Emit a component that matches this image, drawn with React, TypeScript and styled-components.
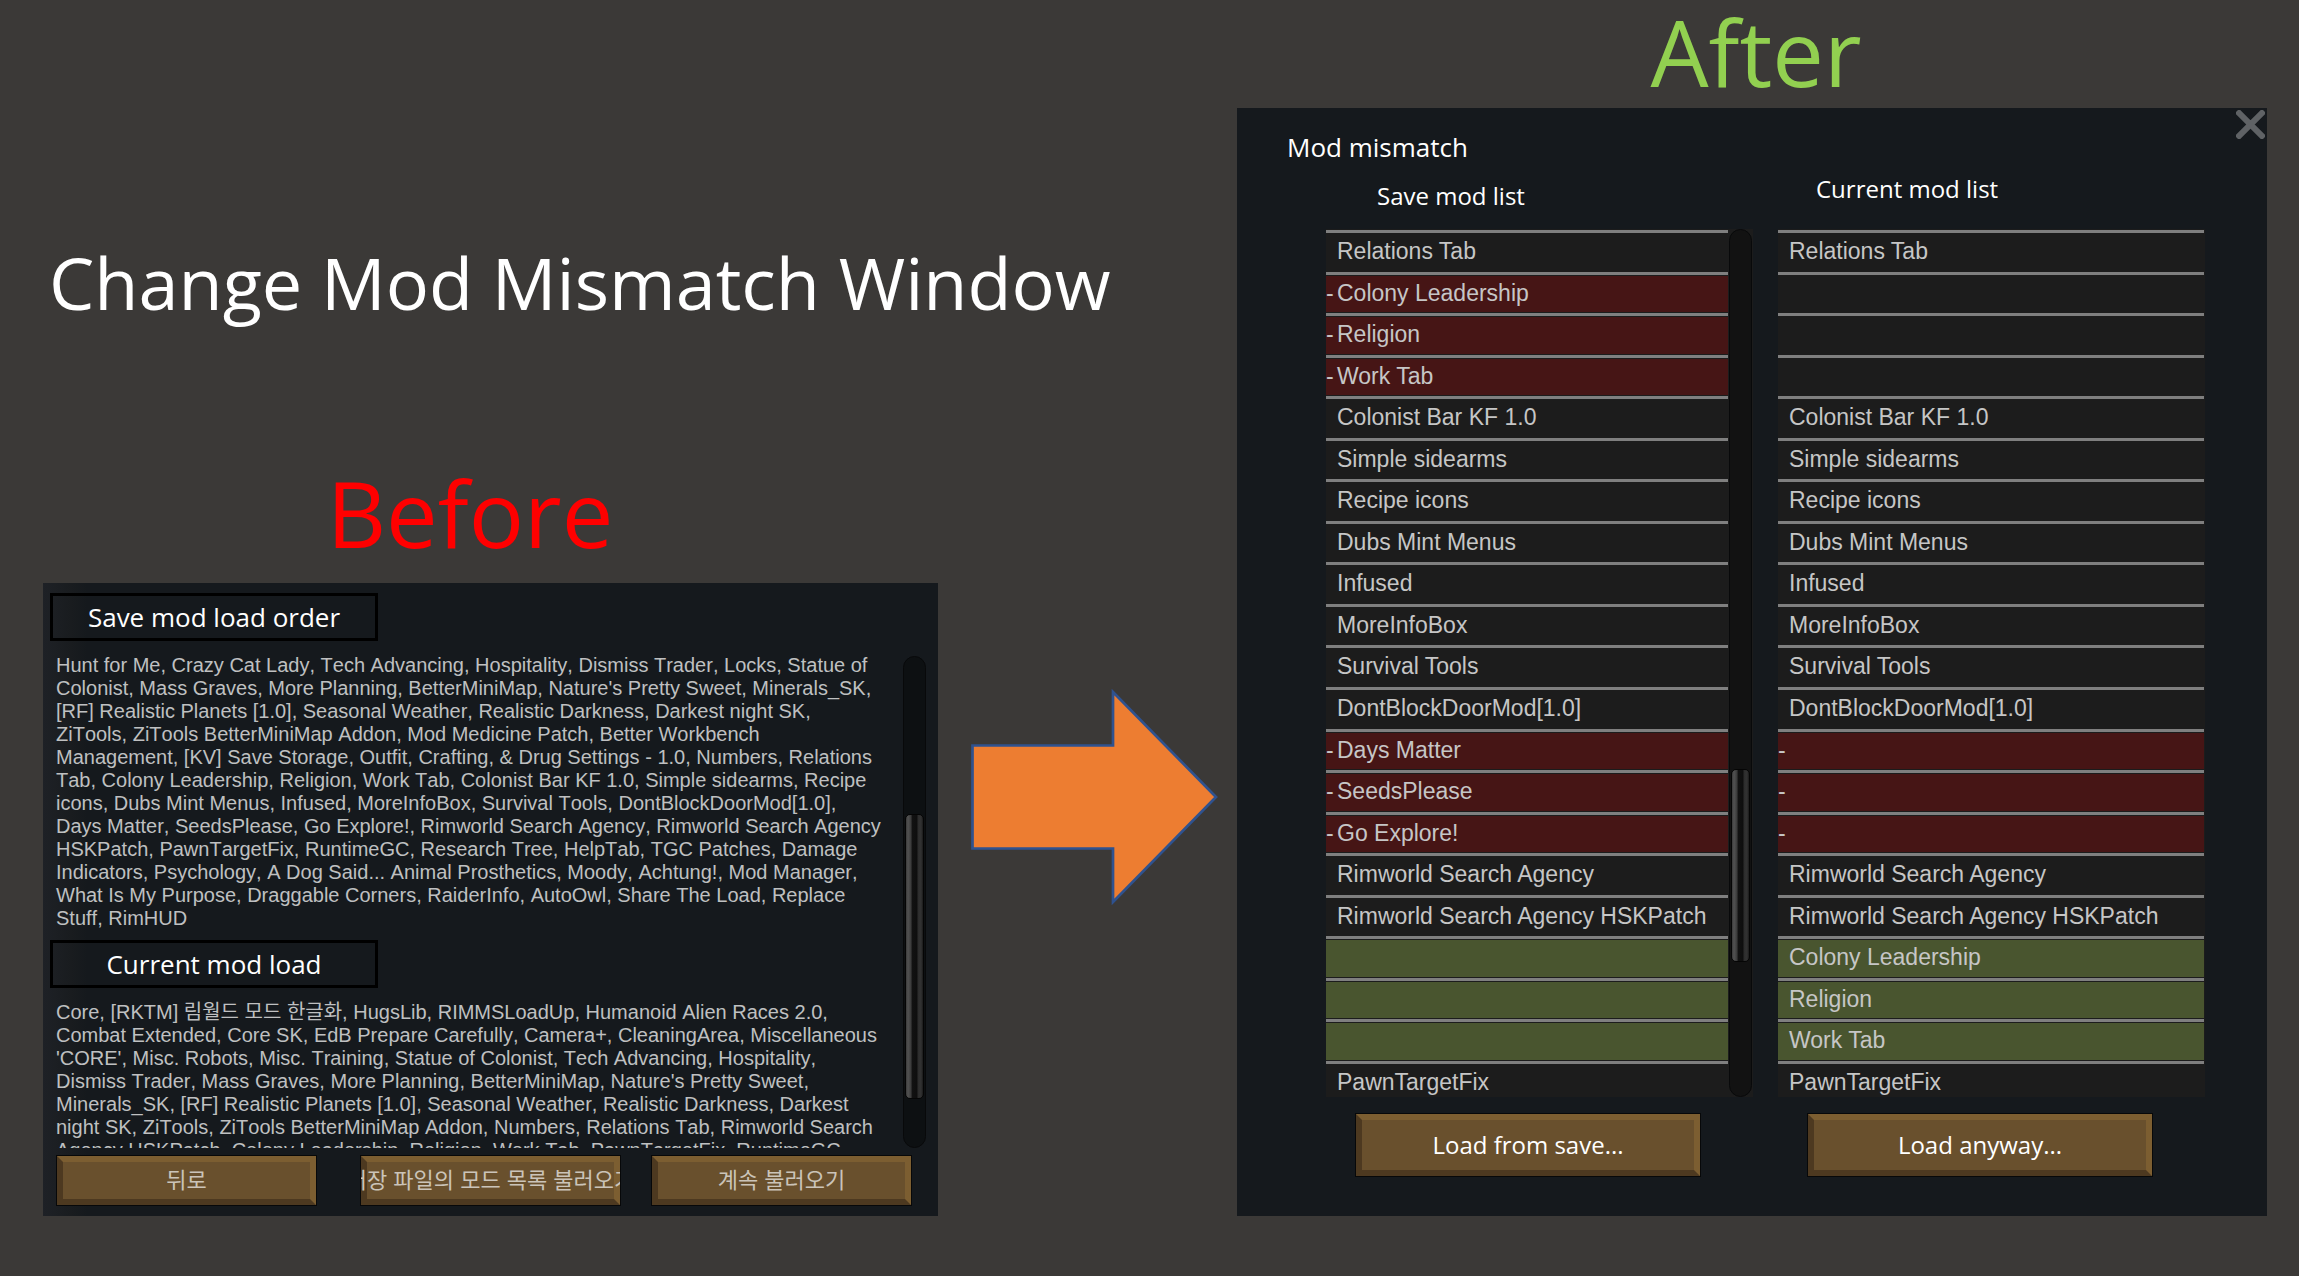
import React from "react";
import styled, { createGlobalStyle } from "styled-components";

const captionFont = `"Open Sans", "Noto Sans", "Noto Sans CJK KR", sans-serif`;
const gameFont = `"Liberation Sans", "Noto Sans CJK KR", sans-serif`;

const GlobalStyle = createGlobalStyle`
  * { box-sizing: border-box; }
  body { margin: 0; background: #3b3937; }
  h1, h2, h3, h4, p, ul { margin: 0; padding: 0; font-weight: 400; }
`;

const Page = styled.main`
  display: grid;
  grid-template-columns: minmax(0, 1194fr) minmax(0, 1030fr);
  min-height: 100vh;
  padding: 4px 32px 60px 43px;
  background: #3b3937;
  color: #fff;
  font-family: ${captionFont};
`;

const LeftSide = styled.section`
  display: flex;
  flex-direction: column;
  justify-content: flex-end;
`;

const RightSide = styled.section`
  display: flex;
  flex-direction: column;
`;

const Title = styled.h1`
  padding-left: 6px;
  margin-bottom: 133px;
  font-size: 72px;
  line-height: 100px;
  white-space: nowrap;
`;

const Comparison = styled.div`
  display: grid;
  grid-template-columns: minmax(0, 895fr) minmax(0, 299fr);
`;

const Caption = styled.h2<{ $color: string }>`
  color: ${(p) => p.$color};
  font-size: 92px;
  line-height: 96px;
  text-align: center;
`;

const BeforeCaption = styled(Caption)`
  grid-column: 1 / -1;
  padding: 0 340px 22px 0;
`;

const AfterCaption = styled(Caption)`
  padding: 0 0 8px 8px;
`;

const BeforeWindow = styled.article`
  display: flex;
  flex-direction: column;
  padding: 10px 12px 10px 7px;
  background: linear-gradient(90deg, #1e2126 0, #191c1f 28px, #15191d 44px);
`;

const LoadOrder = styled.div`
  display: flex;
  height: 555px;
`;

const LoadOrderText = styled.div`
  flex: 1;
  min-width: 0;
  overflow: hidden;
`;

const Label = styled.h3`
  width: 328px;
  height: 48px;
  border: 3px solid #000;
  font-size: 26px;
  line-height: 42px;
  text-align: center;
`;

const ModText = styled.p`
  padding: 13px 0 10px 6px;
  color: #bfc0c1;
  font-family: ${gameFont};
  font-size: 20px;
  font-kerning: none;
  line-height: 23px;
  white-space: nowrap;
`;

const Line = styled.span`
  display: block;
  height: 23px;
`;

const Track = styled.div<{ $fill: string }>`
  display: flex;
  flex-direction: column;
  flex: none;
  width: 23px;
  padding: 0 1px;
  border: 1px solid #08090a;
  border-radius: 12px;
  background: ${(p) => p.$fill};
`;

const LoadOrderTrack = styled(Track)`
  margin-top: 63px;
  padding-top: 157px;
`;

const ListTrack = styled(Track)`
  margin-right: 1px;
  padding-top: 539px;
`;

const Thumb = styled.div<{ $height: number }>`
  height: ${(p) => p.$height}px;
  border: 1px solid #050505;
  border-radius: 5px;
  background: linear-gradient(90deg, #3a3a3a 0, #525252 12%, #3c3c3c 28%, #111 38%, #0e0e0e 62%, #2e2e2e 74%, #323232 88%, #1a1a1a 100%);
`;

const GameButton = styled.button`
  display: flex;
  align-items: center;
  justify-content: center;
  overflow: hidden;
  padding: 0;
  border: 1px solid #070809;
  outline: none;
  white-space: nowrap;
`;

const Bevel = styled.span`
  display: flex;
  flex: 1;
  align-self: stretch;
  align-items: center;
  justify-content: center;
  min-width: 0;
  border: 6px solid;
  border-color: #7c5e31 #7c5e31 #4d3920 #4d3920;
  background: #69502d;
`;

const BeforeButtons = styled.div`
  display: flex;
  padding: 7px 14px 0 6px;
`;

const SmallButton = styled(GameButton)`
  width: 261px;
  height: 51px;
  color: #cbc4b9;
  font-family: ${gameFont};
  font-size: 22px;
  line-height: 30px;

  &:nth-child(2) { margin: 0 30px 0 43px; }
`;

const LargeButton = styled(GameButton)`
  width: 346px;
  height: 64px;
  color: #fff;
  font-family: ${captionFont};
  font-size: 24px;
  line-height: 32px;
`;

const ArrowHolder = styled.div`
  display: flex;
  justify-content: center;
  padding: 106px 0 0 12px;

  svg { width: 248px; height: 216px; }
`;

const AfterWindow = styled.article`
  display: flex;
  flex-direction: column;
  flex: 1;
  position: relative;
  padding: 21px 62px 39px 89px;
  background: #15191d;
`;

const CloseButton = styled.button`
  position: absolute;
  top: 2px;
  right: 2px;
  width: 29px;
  height: 29px;
  padding: 0;
  border: 0;
  background: none;

  svg { display: block; }
`;

const WindowTitle = styled.h3`
  margin: 0 0 8px -39px;
  font-size: 26px;
  line-height: 36px;
`;

const Columns = styled.div`
  display: grid;
  grid-template-columns: minmax(0, 427fr) minmax(0, 427fr);
  column-gap: 25px;
`;

const SaveHeading = styled.h4`
  padding: 7px 0 0 51px;
  font-size: 24px;
  line-height: 32px;
`;

const CurrentHeading = styled.h4`
  padding: 0 0 7px 38px;
  font-size: 24px;
  line-height: 32px;
`;

const ListArea = styled.div`
  display: flex;
  height: 868px;
  margin-top: 17px;
  background: #1c1c1c;
`;

const List = styled.ul`
  display: grid;
  flex: 1;
  grid-template-rows: repeat(20, minmax(0, 1fr)) 36px;
  min-width: 0;
  padding-top: 1px;
  margin-right: 1px;
  list-style: none;
`;

const tones = { none: "#1c1c1c", red: "#461515", green: "#49552f" };
type Tone = keyof typeof tones;

const Row = styled.li<{ $tone: Tone }>`
  display: flex;
  overflow: hidden;
  padding-top: 2px;
  border-top: 3px solid #7f7f7f;
  box-shadow: inset 0 1px #1c1c1c, inset 0 -1px #1c1c1c;
  background: ${(p) => tones[p.$tone]};
  color: #c6c6c6;
  font-family: ${gameFont};
  font-size: 23px;
  line-height: 32px;
  white-space: nowrap;
`;

const Mark = styled.span`
  width: 11px;
  flex: none;
`;

const ButtonCell = styled.div`
  padding: 16px 0 0 29px;
`;

const saveOrder = [
  "Hunt for Me, Crazy Cat Lady, Tech Advancing, Hospitality, Dismiss Trader, Locks, Statue of",
  "Colonist, Mass Graves, More Planning, BetterMiniMap, Nature's Pretty Sweet, Minerals_SK,",
  "[RF] Realistic Planets [1.0], Seasonal Weather, Realistic Darkness, Darkest night SK,",
  "ZiTools, ZiTools BetterMiniMap Addon, Mod Medicine Patch, Better Workbench",
  "Management, [KV] Save Storage, Outfit, Crafting, & Drug Settings - 1.0, Numbers, Relations",
  "Tab, Colony Leadership, Religion, Work Tab, Colonist Bar KF 1.0, Simple sidearms, Recipe",
  "icons, Dubs Mint Menus, Infused, MoreInfoBox, Survival Tools, DontBlockDoorMod[1.0],",
  "Days Matter, SeedsPlease, Go Explore!, Rimworld Search Agency, Rimworld Search Agency",
  "HSKPatch, PawnTargetFix, RuntimeGC, Research Tree, HelpTab, TGC Patches, Damage",
  "Indicators, Psychology, A Dog Said... Animal Prosthetics, Moody, Achtung!, Mod Manager,",
  "What Is My Purpose, Draggable Corners, RaiderInfo, AutoOwl, Share The Load, Replace",
  "Stuff, RimHUD",
];

const currentOrder = [
  "Core, [RKTM] 림월드 모드 한글화, HugsLib, RIMMSLoadUp, Humanoid Alien Races 2.0,",
  "Combat Extended, Core SK, EdB Prepare Carefully, Camera+, CleaningArea, Miscellaneous",
  "'CORE', Misc. Robots, Misc. Training, Statue of Colonist, Tech Advancing, Hospitality,",
  "Dismiss Trader, Mass Graves, More Planning, BetterMiniMap, Nature's Pretty Sweet,",
  "Minerals_SK, [RF] Realistic Planets [1.0], Seasonal Weather, Realistic Darkness, Darkest",
  "night SK, ZiTools, ZiTools BetterMiniMap Addon, Numbers, Relations Tab, Rimworld Search",
  "Agency HSKPatch, Colony Leadership, Religion, Work Tab, PawnTargetFix, RuntimeGC,",
];

type Entry = { name: string; tone?: Tone; mark?: boolean };

const shared: Entry[] = [
  "Colonist Bar KF 1.0",
  "Simple sidearms",
  "Recipe icons",
  "Dubs Mint Menus",
  "Infused",
  "MoreInfoBox",
  "Survival Tools",
  "DontBlockDoorMod[1.0]",
].map((name) => ({ name }));

const saveList: Entry[] = [
  { name: "Relations Tab" },
  { name: "Colony Leadership", tone: "red", mark: true },
  { name: "Religion", tone: "red", mark: true },
  { name: "Work Tab", tone: "red", mark: true },
  ...shared,
  { name: "Days Matter", tone: "red", mark: true },
  { name: "SeedsPlease", tone: "red", mark: true },
  { name: "Go Explore!", tone: "red", mark: true },
  { name: "Rimworld Search Agency" },
  { name: "Rimworld Search Agency HSKPatch" },
  { name: "", tone: "green" },
  { name: "", tone: "green" },
  { name: "", tone: "green" },
  { name: "PawnTargetFix" },
];

const currentList: Entry[] = [
  { name: "Relations Tab" },
  { name: "" },
  { name: "" },
  { name: "" },
  ...shared,
  { name: "", tone: "red", mark: true },
  { name: "", tone: "red", mark: true },
  { name: "", tone: "red", mark: true },
  { name: "Rimworld Search Agency" },
  { name: "Rimworld Search Agency HSKPatch" },
  { name: "Colony Leadership", tone: "green" },
  { name: "Religion", tone: "green" },
  { name: "Work Tab", tone: "green" },
  { name: "PawnTargetFix" },
];

function ModLines({ lines }: { lines: string[] }) {
  return (
    <ModText>
      {lines.map((line) => (
        <Line key={line}>{line}</Line>
      ))}
    </ModText>
  );
}

function ModList({ entries }: { entries: Entry[] }) {
  return (
    <List>
      {entries.map((entry, i) => (
        <Row key={i} $tone={entry.tone ?? "none"}>
          <Mark>{entry.mark ? "-" : ""}</Mark>
          {entry.name}
        </Row>
      ))}
    </List>
  );
}

export default function App() {
  return (
    <>
      <GlobalStyle />
      <Page>
        <LeftSide>
          <Title>Change Mod Mismatch Window</Title>
          <Comparison>
            <BeforeCaption $color="#ff0000">Before</BeforeCaption>
            <BeforeWindow>
              <LoadOrder>
                <LoadOrderText>
                  <Label>Save mod load order</Label>
                  <ModLines lines={saveOrder} />
                  <Label>Current mod load</Label>
                  <ModLines lines={currentOrder} />
                </LoadOrderText>
                <LoadOrderTrack $fill="#0d1012">
                  <Thumb $height={285} />
                </LoadOrderTrack>
              </LoadOrder>
              <BeforeButtons>
                <SmallButton type="button"><Bevel>뒤로</Bevel></SmallButton>
                <SmallButton type="button"><Bevel>저장 파일의 모드 목록 불러오기</Bevel></SmallButton>
                <SmallButton type="button"><Bevel>계속 불러오기</Bevel></SmallButton>
              </BeforeButtons>
            </BeforeWindow>
            <ArrowHolder>
              <svg viewBox="0 0 248 216" aria-hidden="true">
                <path
                  d="M2.5 56.5H143V3L246 108L143 213V159.500H2.500Z"
                  fill="#ed7d31"
                  stroke="#2f528f"
                  strokeWidth="2.7"
                />
              </svg>
            </ArrowHolder>
          </Comparison>
        </LeftSide>
        <RightSide>
          <AfterCaption $color="#92d050">After</AfterCaption>
          <AfterWindow>
            <CloseButton type="button" aria-label="Close">
              <svg width="29" height="29" viewBox="0 0 29 29">
                <path d="M1 1L28 28M28 1L1 28" stroke="#5f6265" strokeWidth="6" />
              </svg>
            </CloseButton>
            <WindowTitle>Mod mismatch</WindowTitle>
            <Columns>
              <SaveHeading>Save mod list</SaveHeading>
              <CurrentHeading>Current mod list</CurrentHeading>
              <ListArea>
                <ModList entries={saveList} />
                <ListTrack $fill="#121212">
                  <Thumb $height={193} />
                </ListTrack>
              </ListArea>
              <ListArea>
                <ModList entries={currentList} />
              </ListArea>
              <ButtonCell>
                <LargeButton type="button"><Bevel>Load from save...</Bevel></LargeButton>
              </ButtonCell>
              <ButtonCell>
                <LargeButton type="button"><Bevel>Load anyway...</Bevel></LargeButton>
              </ButtonCell>
            </Columns>
          </AfterWindow>
        </RightSide>
      </Page>
    </>
  );
}
